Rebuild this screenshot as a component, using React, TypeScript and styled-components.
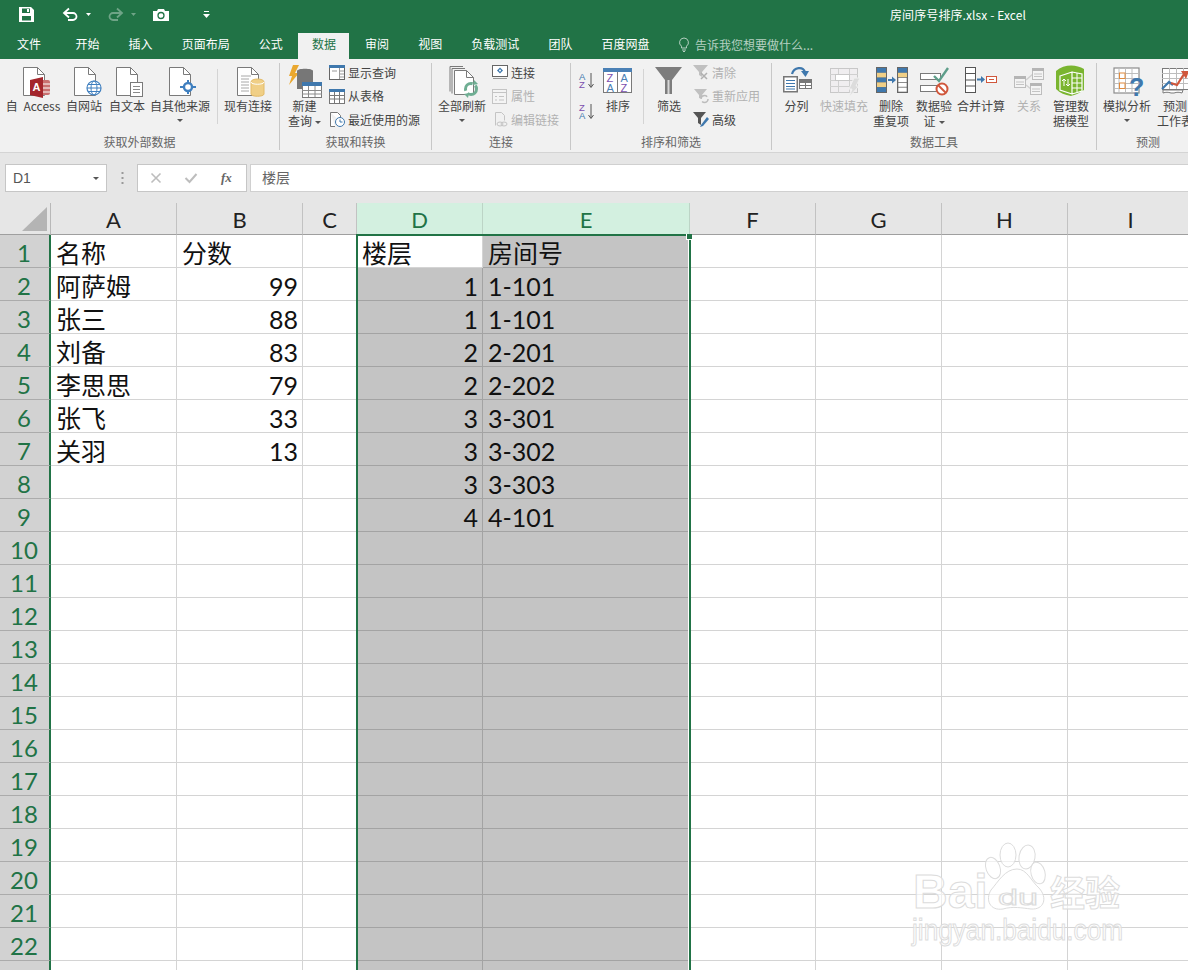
import React from "react";
import styled, { createGlobalStyle } from "styled-components";

const GREEN = "#217346";
const UI_FONT = `"Noto Sans CJK SC", "Liberation Sans", sans-serif`;
const CELL_FONT = `Lato, "Noto Sans CJK SC", sans-serif`;

const GlobalStyle = createGlobalStyle`
  html, body { margin: 0; padding: 0; background: #fff; overflow: hidden; }
  * { box-sizing: border-box; }
`;

const Page = styled.div`
  width: 1188px;
  height: 970px;
  overflow: hidden;
  display: flex;
  flex-direction: column;
  font-family: ${UI_FONT};
  font-size: 12px;
  color: #444;
`;

/* title bar */
const TitleBar = styled.div`
  height: 33px;
  flex-shrink: 0;
  background: ${GREEN};
  display: flex;
  align-items: center;
  padding: 0 0 4px 19px;
  color: #fff;
`;
const QatItem = styled.span<{ $ml?: number; $dim?: boolean }>`
  display: flex;
  margin-left: ${(p) => p.$ml || 0}px;
  opacity: ${(p) => (p.$dim ? 0.35 : 1)};
`;
const Title = styled.span`
  margin-left: 680px;
  white-space: nowrap;
  letter-spacing: 0.1px;
`;

/* tabs */
const TabBar = styled.div`
  height: 26px;
  flex-shrink: 0;
  background: ${GREEN};
  display: flex;
  gap: 2.1px;
  padding-left: 3.5px;
`;
const Tab = styled.div<{ $active?: boolean; $first?: boolean }>`
  padding: 0 13.5px;
  margin-right: ${(p) => (p.$first ? 5.4 : 0)}px;
  line-height: 22px;
  color: ${(p) => (p.$active ? GREEN : "#fff")};
  background: ${(p) => (p.$active ? "#f1f1f1" : "transparent")};
`;
const TellMe = styled.div`
  display: flex;
  align-items: center;
  gap: 5px;
  margin-left: 13px;
  padding-bottom: 4px;
  color: #b5d0c1;
`;

/* ribbon */
const Ribbon = styled.div`
  height: 94px;
  flex-shrink: 0;
  background: #f1f1f1;
  border-bottom: 1px solid #d4d4d4;
  display: flex;
  padding-top: 4px;
  overflow: hidden;
`;
const Group = styled.section<{ $w: number; $last?: boolean }>`
  width: ${(p) => p.$w}px;
  height: 87px;
  flex-shrink: 0;
  display: flex;
  flex-direction: column;
  border-right: ${(p) => (p.$last ? "none" : "1px solid #c8c8c8")};
`;
const GroupBody = styled.div<{ $pl?: number }>`
  height: 71px;
  display: flex;
  padding-left: ${(p) => p.$pl || 0}px;
`;
const GroupLabel = styled.div`
  line-height: 16px;
  text-align: center;
  color: #666;
`;
const BigBtn = styled.div<{ $w: number; $off?: boolean }>`
  width: ${(p) => p.$w}px;
  flex-shrink: 0;
  display: flex;
  flex-direction: column;
  align-items: center;
  padding-top: 2px;
  line-height: 15px;
  word-spacing: 3px;
  white-space: nowrap;
  color: ${(p) => (p.$off ? "#b1b1b1" : "#444")};
`;
const BigIconSlot = styled.div`
  height: 33px;
`;
const Caret = styled.span<{ $ml?: number }>`
  display: inline-block;
  vertical-align: middle;
  margin-left: ${(p) => p.$ml || 0}px;
  border-left: 3px solid transparent;
  border-right: 3px solid transparent;
  border-top: 3px solid #555;
`;
const CaretRow = styled.div`
  height: 15px;
  display: flex;
  align-items: center;
`;
const Divider = styled.div<{ $ml: number; $mr: number }>`
  width: 1px;
  height: 55px;
  margin: 6px ${(p) => p.$mr}px 0 ${(p) => p.$ml}px;
  background: #d4d4d4;
  flex-shrink: 0;
`;
const SmallStack = styled.div`
  display: flex;
  flex-direction: column;
  gap: 3.5px;
  margin-top: -1px;
`;
const SmallBtn = styled.div<{ $off?: boolean }>`
  height: 20px;
  display: flex;
  align-items: center;
  gap: 3px;
  white-space: nowrap;
  color: ${(p) => (p.$off ? "#b1b1b1" : "#444")};
`;
const SortStack = styled.div`
  width: 25px;
  flex-shrink: 0;
  padding: 9px 0 0 8px;
  display: flex;
  flex-direction: column;
  gap: 14px;
`;

/* formula bar */
const FormulaBar = styled.div`
  height: 50px;
  flex-shrink: 0;
  background: #e6e6e6;
  padding: 11px 0 11px 5px;
  display: flex;
`;
const NameBox = styled.div`
  width: 102px;
  background: #fff;
  border: 1px solid #c6c6c6;
  display: flex;
  align-items: center;
  justify-content: space-between;
  padding: 0 7px;
  font: 14px "Liberation Sans", sans-serif;
  color: #555;
`;
const DotsSlot = styled.div`
  width: 30px;
  display: flex;
  align-items: center;
  justify-content: center;
`;
const FxBox = styled.div`
  width: 110px;
  background: #fff;
  border: 1px solid #c6c6c6;
  display: flex;
  align-items: center;
  padding-left: 11px;
  gap: 21px;
`;
const FxLabel = styled.span`
  font: italic bold 13px "Liberation Serif", serif;
  color: #666;
  margin-left: 2px;
`;
const FormulaInput = styled.div`
  flex: 1;
  margin-left: 3px;
  background: #fff;
  border: 1px solid #d0d0d0;
  border-right: none;
  padding-left: 11px;
  font-size: 14px;
  line-height: 24px;
  color: #666;
`;

/* sheet */
const Sheet = styled.div`
  position: relative;
  flex: 1;
  display: grid;
  grid-template-columns: 51px 126px 126px 54px 126px 207px 126px 126px 126px 126px;
  grid-auto-rows: 33px;
  grid-template-rows: 32px;
  align-content: start;
  overflow: hidden;
  background: #fff;
  font-family: ${CELL_FONT};
`;
const Corner = styled.div`
  background: #e6e6e6;
  border-right: 1px solid #b8b8b8;
  border-bottom: 1px solid #9f9f9f;
  padding: 4px 0 0 22px;
`;
const ColHead = styled.div<{ $on?: boolean }>`
  background: ${(p) => (p.$on ? "#d3f0e0" : "#e6e6e6")};
  color: ${(p) => (p.$on ? GREEN : "#222")};
  border-right: 1px solid ${(p) => (p.$on ? "#bcd4c6" : "#c2c2c2")};
  border-bottom: 1px solid #9f9f9f;
  text-align: center;
  font-size: 22px;
  line-height: 34px;
`;
const RowHead = styled.div`
  background: #d2d2d2;
  color: ${GREEN};
  border-right: 2px solid ${GREEN};
  border-bottom: 1px solid #ababab;
  text-align: center;
  padding-right: 1px;
  font-size: 24px;
  line-height: 35px;
`;
const Cell = styled.div<{ $num?: boolean; $sel?: boolean }>`
  background: ${(p) => (p.$sel ? "#c4c4c4" : "#fff")};
  border-right: 1px solid ${(p) => (p.$sel ? "#a3a3a3" : "#d4d4d4")};
  border-bottom: 1px solid ${(p) => (p.$sel ? "#a3a3a3" : "#d4d4d4")};
  text-align: ${(p) => (p.$num ? "right" : "left")};
  padding: 0 4px 0 5px;
  font-size: 25px;
  line-height: 36px;
  color: #111;
  white-space: nowrap;
  overflow: hidden;
`;
const Selection = styled.div`
  position: absolute;
  left: 356px;
  top: 31px;
  width: 335px;
  bottom: -4px;
  border: 2px solid ${GREEN};
  box-shadow: inset -1px 0 0 #fff;
  pointer-events: none;
`;
const FillHandle = styled.div`
  position: absolute;
  right: -3px;
  top: -2px;
  width: 6px;
  height: 6px;
  background: ${GREEN};
  border-left: 1px solid #fff;
  border-bottom: 1px solid #fff;
`;
const Watermark = styled.svg`
  position: absolute;
  left: 905px;
  top: 637px;
  pointer-events: none;
`;

/* icons */
const SvgBase = styled.svg`
  display: block;
  flex-shrink: 0;
  overflow: visible;
`;
const Svg = ({ w = 36, h = 33, children }: { w?: number; h?: number; children: React.ReactNode }) => (
  <SvgBase width={w} height={h} viewBox={`0 0 ${w} ${h}`}>
    {children}
  </SvgBase>
);

const Doc = ({ x, y = 2.5, w = 21, h = 28 }: { x: number; y?: number; w?: number; h?: number }) => (
  <>
    <path d={`M${x} ${y}h${w - 7}l7 7v${h - 7}h${-w}z`} fill="#fff" stroke="#7a7a7a" />
    <path d={`M${x + w - 7} ${y}v7h7`} fill="none" stroke="#7a7a7a" />
  </>
);

const AccessIcon = () => (
  <Svg>
    <Doc x={8.5} />
    <rect x="24" y="15" width="11" height="15" rx="2" fill="#c9706f" />
    <path d="M24 19h11M24 23h11M24 27h11" stroke="#fff" />
    <path d="M15 15l13-3v21l-13-3z" fill="#a4262c" />
    <text x="17.5" y="26" fontFamily="Liberation Sans" fontWeight="bold" fontSize="11" fill="#fff">A</text>
  </Svg>
);
const WebIcon = () => (
  <Svg>
    <Doc x={8.5} />
    <circle cx="28" cy="23" r="7" fill="#fff" stroke="#3f7fbf" strokeWidth="1.2" />
    <ellipse cx="28" cy="23" rx="3" ry="7" fill="none" stroke="#3f7fbf" />
    <path d="M21 23h14M22 19.5h12M22 26.5h12" stroke="#3f7fbf" />
  </Svg>
);
const TextIcon = () => (
  <Svg>
    <Doc x={7.5} />
    <rect x="21.5" y="17.5" width="12" height="14" fill="#fff" stroke="#7a7a7a" />
    <path d="M24 21.5h7M24 24.5h7M24 27.5h7" stroke="#8a8a8a" />
  </Svg>
);
const OtherIcon = () => (
  <Svg>
    <Doc x={7.5} />
    <path d="M26 15v14M18 22h16" stroke="#3f7fbf" strokeWidth="2" />
    <circle cx="26" cy="22" r="4" fill="#fff" stroke="#3f7fbf" strokeWidth="2.4" />
  </Svg>
);
const ExistingIcon = () => (
  <Svg>
    <Doc x={7.5} />
    <path d="M11 11h10M11 14h8M11 17h8M11 20h8M11 23h8M11 26h8" stroke="#a8a8a8" />
    <path d="M21 17c0-4 13-4 13 0v12c0 3-13 3-13 0z" fill="#f0cf86" stroke="#e3bb68" />
    <path d="M21 17c0 3 13 3 13 0" fill="none" stroke="#fff" />
  </Svg>
);
const NewQueryIcon = () => (
  <Svg>
    <path d="M6 0h6l-4 8h4L2 20l3-9H2z" fill="#eaa82f" />
    <path d="M10 6c0-3 16-3 16 0v18H10z" fill="#777" />
    <rect x="15.5" y="17.5" width="19" height="15" fill="#fff" stroke="#7a7a7a" />
    <rect x="15" y="17" width="20" height="4" fill="#3f78ad" />
    <path d="M15 25.5h20M15 29h20M21.5 21v11M28 21v11" stroke="#8a8a8a" />
  </Svg>
);
const RefreshIcon = () => (
  <Svg>
    <path d="M6 26.5v-25h13" fill="none" stroke="#7a7a7a" />
    <path d="M8 28.5v-25h13" fill="none" stroke="#7a7a7a" />
    <Doc x={10.5} y={5.5} w={19} h={24} />
    <circle cx="27" cy="24" r="5.5" fill="none" stroke="#6fae93" strokeWidth="3" strokeDasharray="12 3" />
    <path d="M30 15l4 4-5 1zM24 33l-4-4 5-1z" fill="#6fae93" />
  </Svg>
);
const SortLetter = ({ x, y, c, t }: { x: number; y: number; c: string; t: string }) => (
  <text x={x} y={y} fontFamily="Liberation Sans" fontSize="11" fill={c}>{t}</text>
);
const SortBigIcon = () => (
  <Svg>
    <rect x="3.5" y="3.5" width="28" height="24" fill="#fff" stroke="#7a7a7a" />
    <rect x="3" y="3" width="29" height="4" fill="#4a80b5" />
    <path d="M17.5 7v21" stroke="#7a7a7a" />
    <SortLetter x={6.5} y={17} c="#7b4fae" t="Z" />
    <SortLetter x={6.5} y={27} c="#4a80b5" t="A" />
    <SortLetter x={20.5} y={17} c="#4a80b5" t="A" />
    <SortLetter x={20.5} y={27} c="#7b4fae" t="Z" />
  </Svg>
);
const FilterBigIcon = () => (
  <Svg>
    <path d="M4 2h27L21 15v14h-7V15z" fill="#7d7d7d" />
    <path d="M16.5 15h2v14h-2z" fill="#d8d8d8" />
  </Svg>
);
const SplitIcon = () => (
  <Svg>
    <rect x="4.75" y="11.75" width="13.5" height="15" fill="#fff" stroke="#777" strokeWidth="1.5" />
    <path d="M7 15.5h9M7 18.5h9M7 21.5h9M7 24h9" stroke="#3f78ad" />
    <rect x="20" y="14" width="13" height="10" fill="#777" />
    <path d="M21 18h5v2h-5zM27 18h5v2h-5zM21 21h5v2h-5zM27 21h5v2h-5z" fill="#fff" />
    <path d="M13 9c2-7 11-8 13-2" fill="none" stroke="#3f78ad" strokeWidth="2.2" />
    <path d="M22 6h8l-3.5 6z" fill="#3f78ad" />
  </Svg>
);
const FlashFillIcon = () => (
  <Svg>
    <rect x="4.5" y="3.5" width="27" height="24" fill="#f0eef0" stroke="#c8c8c8" />
    <path d="M4 9.5h28M4 15.5h28M4 21.5h28M12.5 4v24M23.5 4v24" stroke="#d0d0d0" />
    <rect x="9.5" y="9.5" width="14" height="6" fill="#fff" stroke="#c8c8c8" />
    <path d="M28 13h6l-4 8h3l-10 11 3-8h-3z" fill="#dcdcdc" stroke="#f1f1f1" />
  </Svg>
);
const DupColumn = ({ x, a }: { x: number; a: string[] }) => (
  <>
    <rect x={x} y="2" width="11" height="26" fill="#666" />
    {a.map((f, i) => (
      <rect key={i} x={x + 1} y={3 + i * 4.8} width="9" height="4.8" fill={f} stroke={f === "#fff" ? "#666" : "none"} strokeWidth="0.6" />
    ))}
  </>
);
const DuplicatesIcon = () => (
  <Svg>
    <DupColumn x={3} a={["#3f78ad", "#f0cf86", "#3f78ad", "#f0cf86", "#3f78ad"]} />
    <DupColumn x={24} a={["#3f78ad", "#f0cf86", "#fff", "#fff", "#fff"]} />
    <path d="M15 15h5" stroke="#3f78ad" strokeWidth="2" />
    <path d="M19 11.5l4 3.5-4 3.5z" fill="#3f78ad" />
  </Svg>
);
const ValidationIcon = () => (
  <Svg>
    <rect x="4.5" y="8.5" width="20" height="6" fill="#fff" stroke="#7a7a7a" />
    <rect x="4.5" y="20.5" width="20" height="6" fill="#fff" stroke="#7a7a7a" />
    <path d="M18 11l5 5 9-13" fill="none" stroke="#5e9e8a" strokeWidth="2.4" />
    <circle cx="26" cy="24" r="5.5" fill="#fff" stroke="#d0573c" strokeWidth="2" />
    <path d="M22 20l8 8" stroke="#d0573c" strokeWidth="2" />
  </Svg>
);
const ConsolidateIcon = () => (
  <Svg>
    <rect x="2.5" y="2.5" width="10" height="25" fill="#fff" stroke="#555" />
    <path d="M2 8.5h11M2 15h11M2 21h11" stroke="#555" />
    <path d="M14 14.5h5" stroke="#3f78ad" strokeWidth="2" />
    <path d="M18 11l4 3.5-4 3.5z" fill="#3f78ad" />
    <rect x="23.5" y="11.5" width="10" height="6" fill="#fff" stroke="#d0573c" />
    <path d="M26 14.5h5" stroke="#d0573c" />
  </Svg>
);
const RelationBox = ({ x, y }: { x: number; y: number }) => (
  <>
    <rect x={x + 0.5} y={y + 0.5} width="11" height="11" fill="#f4f4f4" stroke="#bdbdbd" />
    <rect x={x} y={y} width="12" height="3" fill="#b5b5b5" />
    <path d={`M${x + 2} ${y + 6}h8M${x + 2} ${y + 8.5}h8`} stroke="#c4c4c4" />
  </>
);
const RelationIcon = () => (
  <Svg>
    <path d="M15 15l7-6M15 20l5 4" stroke="#d0d0d0" strokeWidth="1.5" />
    <RelationBox x={3} y={11} />
    <RelationBox x={21} y={3} />
    <RelationBox x={19} y={18} />
  </Svg>
);
const ModelIcon = () => (
  <Svg>
    <path d="M3 6c8-7 20-7 28-2v21c-6 4-10 5-13 6-6-1-11-3-15-7z" fill="#7ab530" />
    <path d="M7 11l12-4v22l-12-4zM19 7l10 2v17l-10 3" fill="none" stroke="#fff" strokeWidth="1.2" />
    <path d="M19 13h10M19 18h10M19 23h10M24 8v19" stroke="#fff" />
    <path d="M11 21v-7l-2 2M11 14l2 2M15 14v7l-2-2M15 21l2-2" fill="none" stroke="#fff" />
  </Svg>
);
const WhatIfIcon = () => (
  <Svg>
    <rect x="5" y="3" width="25" height="25" fill="#fff" stroke="#8c8c8c" strokeWidth="1.2" />
    <path d="M5 8.5h25M5 13.5h25M5 18.5h25M5 23.5h25M10 3v25M16.5 3v25M23 3v25" stroke="#bdbdbd" />
    <rect x="10.5" y="8" width="5.5" height="5.5" fill="#fff" stroke="#e08a3c" />
    <rect x="10.5" y="18" width="5.5" height="5.5" fill="#fff" stroke="#e08a3c" />
    <text x="20" y="31" fontFamily="Liberation Sans" fontWeight="bold" fontSize="25" fill="#3f78ad">?</text>
  </Svg>
);
const ForecastIcon = () => (
  <Svg>
    <rect x="5.5" y="3.5" width="28" height="21" fill="#fff" stroke="#7a7a7a" />
    <path d="M5 8.5h29M5 13.5h29M5 18.5h29M12.5 3v21M19.5 3v21M26.5 3v21" stroke="#bdbdbd" />
    <path d="M6 28c3-1 5-1 8 0h3c3-1 5-1 8 0l1-3H6z" fill="#fff" stroke="#7a7a7a" />
    <path d="M5 24l7-7 4 3" fill="none" stroke="#3f78ad" strokeWidth="2.2" />
    <path d="M14 18l6 2 7-11" fill="none" stroke="#d0573c" strokeWidth="2.2" />
    <path d="M24 6h8l-3 8z" fill="#d0573c" />
  </Svg>
);

const ShowQueryIcon = () => (
  <Svg w={16} h={16}>
    <rect x=".5" y="1.5" width="15" height="14" fill="#fff" stroke="#666" />
    <rect x="0" y="1" width="16" height="3" fill="#3f78ad" />
    <path d="M10.5 4v11M11 7h4M11 10h4M11 13h4M3 7h5" stroke="#999" />
  </Svg>
);
const TableIcon = () => (
  <Svg w={16} h={16}>
    <rect x=".5" y="1.5" width="15" height="14" fill="#fff" stroke="#777" />
    <rect x="0" y="1" width="16" height="3" fill="#3f78ad" />
    <path d="M0 7.5h16M0 11h16M5.5 4v11M10.5 4v11" stroke="#777" />
  </Svg>
);
const RecentIcon = () => (
  <Svg w={16} h={16}>
    <path d="M1.5 1.5h7l3 3v6M6 15.5H1.5v-14" fill="#fff" stroke="#777" />
    <circle cx="11" cy="11" r="4.5" fill="#fff" stroke="#3f78ad" />
    <path d="M11 8.5V11h2.5" fill="none" stroke="#3f78ad" />
  </Svg>
);
const ConnectionIcon = () => (
  <Svg w={16} h={16}>
    <rect x=".5" y="1.5" width="15" height="11" fill="#fff" stroke="#666" />
    <path d="M1 14.5h14" stroke="#999" />
    <path d="M8 3.5l3 3-3 3-3-3z" fill="#3f78ad" />
    <circle cx="8" cy="6.5" r="1" fill="#fff" />
  </Svg>
);
const PropsIcon = () => (
  <Svg w={16} h={16}>
    <rect x=".5" y="1.5" width="14" height="14" fill="#f4f4f4" stroke="#c4c4c4" />
    <path d="M1 4.5h13M7 8.5h5M7 12h5M3 8.5h2M3 12h2" stroke="#c4c4c4" />
  </Svg>
);
const EditLinkIcon = () => (
  <Svg w={16} h={16}>
    <path d="M3.5 14.5v-13h6l3 3v5" fill="none" stroke="#c4c4c4" />
    <ellipse cx="8" cy="13" rx="3" ry="2" fill="none" stroke="#c4c4c4" />
    <ellipse cx="12" cy="13" rx="3" ry="2" fill="none" stroke="#c4c4c4" />
  </Svg>
);
const ClearIcon = () => (
  <Svg w={16} h={16}>
    <path d="M0 1h15L9 8v5L6 11V8z" fill="#c0c0c0" />
    <path d="M8 9l6 6M14 9l-6 6" stroke="#b0b0b0" strokeWidth="1.5" />
  </Svg>
);
const ReapplyIcon = () => (
  <Svg w={16} h={16}>
    <path d="M1 1h13L9 7v4L6 10V7z" fill="#c0c0c0" />
    <circle cx="11.5" cy="11" r="3.5" fill="none" stroke="#bcbcbc" strokeWidth="1.5" strokeDasharray="8 3" />
  </Svg>
);
const AdvancedIcon = () => (
  <Svg w={16} h={16}>
    <path d="M0 1h13L8 7v7L5 12V7z" fill="#555" />
    <path d="M8 14l6-8 2 2-6 7-3 1z" fill="#3f78ad" />
  </Svg>
);
const AzIcon = ({ flip }: { flip?: boolean }) => (
  <Svg w={17} h={17}>
    <text x="0" y="8" fontFamily="Liberation Sans" fontSize="9.5" fill={flip ? "#7b4fae" : "#3f78ad"}>{flip ? "Z" : "A"}</text>
    <text x="0" y="16" fontFamily="Liberation Sans" fontSize="9.5" fill={flip ? "#3f78ad" : "#7b4fae"}>{flip ? "A" : "Z"}</text>
    <path d="M12 1v14M9.5 12l2.5 3.5 2.5-3.5" fill="none" stroke="#555" />
  </Svg>
);

/* title bar icons */
const SaveIcon = () => (
  <Svg w={15} h={15}>
    <path d="M0 0h12l3 3v12H0z" fill="#fff" />
    <rect x="3" y="1.5" width="8" height="4.5" fill={GREEN} />
    <rect x="3" y="9" width="9" height="4.5" fill={GREEN} />
    <rect x="8" y="2" width="2" height="3" fill="#fff" />
  </Svg>
);
const UndoIcon = ({ flip }: { flip?: boolean }) => (
  <Svg w={15} h={13}>
    <g transform={flip ? "translate(15 0) scale(-1 1)" : undefined}>
      <path d="M2 5h8a3.5 3.5 0 0 1 0 7H5" fill="none" stroke="#fff" strokeWidth="1.8" />
      <path d="M6 .5L1 5l5 4.5" fill="none" stroke="#fff" strokeWidth="1.8" />
    </g>
  </Svg>
);
const TitleCaret = () => (
  <Svg w={5} h={3}>
    <path d="M0 0h5L2.5 3z" fill="#fff" />
  </Svg>
);
const CameraIcon = () => (
  <Svg w={16} h={12}>
    <path d="M0 2h4l1-2h6l1 2h4v10H0z" fill="#fff" />
    <circle cx="8" cy="6.5" r="3" fill="none" stroke={GREEN} strokeWidth="1.3" />
  </Svg>
);
const CustomizeIcon = () => (
  <Svg w={7} h={7}>
    <path d="M1 .5h5" stroke="#fff" />
    <path d="M0 3h7L3.5 7z" fill="#fff" />
  </Svg>
);
const BulbIcon = () => (
  <Svg w={12} h={15}>
    <path d="M6 1a4.500 4.500 0 0 0-2.500 8.200V11h5V9.200A4.500 4.500 0 0 0 6 1z" fill="none" stroke="#b5d0c1" />
    <path d="M4 13h4M5 14.5h2" stroke="#b5d0c1" />
  </Svg>
);
const DotsIcon = () => (
  <Svg w={3} h={12}>
    <path d="M.5 1h2M.5 6h2M.5 11h2" stroke="#999" strokeWidth="2" />
  </Svg>
);
const CancelIcon = () => (
  <Svg w={14} h={14}>
    <path d="M2.5 2.5l9 9M11.5 2.5l-9 9" stroke="#bdbdbd" strokeWidth="1.6" />
  </Svg>
);
const EnterIcon = () => (
  <Svg w={14} h={14}>
    <path d="M1.5 7l4 4 7-8" fill="none" stroke="#bdbdbd" strokeWidth="2" />
  </Svg>
);

const Big = ({ w, icon, off, lines, caret }: { w: number; icon: React.ReactNode; off?: boolean; lines: string[]; caret?: boolean }) => (
  <BigBtn $w={w} $off={off}>
    <BigIconSlot>{icon}</BigIconSlot>
    {lines.map((l, i) => (
      <span key={i}>
        {l}
        {caret && lines.length > 1 && i === lines.length - 1 && <Caret $ml={3} />}
      </span>
    ))}
    {caret && lines.length === 1 && (
      <CaretRow>
        <Caret />
      </CaretRow>
    )}
  </BigBtn>
);

const Small = ({ icon, off, text }: { icon: React.ReactNode; off?: boolean; text: string }) => (
  <SmallBtn $off={off}>
    {icon}
    <span>{text}</span>
  </SmallBtn>
);

const TABS = ["文件", "开始", "插入", "页面布局", "公式", "数据", "审阅", "视图", "负载测试", "团队", "百度网盘"];
const COLS = ["A", "B", "C", "D", "E", "F", "G", "H", "I"];
const DATA: Record<number, [string, string, string, string]> = {
  1: ["名称", "分数", "楼层", "房间号"],
  2: ["阿萨姆", "99", "1", "1-101"],
  3: ["张三", "88", "1", "1-101"],
  4: ["刘备", "83", "2", "2-201"],
  5: ["李思思", "79", "2", "2-202"],
  6: ["张飞", "33", "3", "3-301"],
  7: ["关羽", "13", "3", "3-302"],
  8: ["", "", "3", "3-303"],
  9: ["", "", "4", "4-101"],
};
const ROWS = Array.from({ length: 23 }, (_, i) => i + 1);

export default function App() {
  return (
    <Page>
      <GlobalStyle />
      <TitleBar>
        <QatItem><SaveIcon /></QatItem>
        <QatItem $ml={29}><UndoIcon /></QatItem>
        <QatItem $ml={8}><TitleCaret /></QatItem>
        <QatItem $ml={17} $dim><UndoIcon flip /></QatItem>
        <QatItem $ml={8} $dim><TitleCaret /></QatItem>
        <QatItem $ml={17}><CameraIcon /></QatItem>
        <QatItem $ml={34}><CustomizeIcon /></QatItem>
        <Title>房间序号排序.xlsx - Excel</Title>
      </TitleBar>

      <TabBar>
        {TABS.map((t, i) => (
          <Tab key={t} $first={i === 0} $active={t === "数据"}>{t}</Tab>
        ))}
        <TellMe>
          <BulbIcon />
          <span>告诉我您想要做什么...</span>
        </TellMe>
      </TabBar>

      <Ribbon>
        <Group $w={280}>
          <GroupBody $pl={3}>
            <Big w={60} icon={<AccessIcon />} lines={["自 Access"]} />
            <Big w={42} icon={<WebIcon />} lines={["自网站"]} />
            <Big w={44} icon={<TextIcon />} lines={["自文本"]} />
            <Big w={62} icon={<OtherIcon />} lines={["自其他来源"]} caret />
            <Divider $ml={6} $mr={1} />
            <Big w={58} icon={<ExistingIcon />} lines={["现有连接"]} />
          </GroupBody>
          <GroupLabel>获取外部数据</GroupLabel>
        </Group>
        <Group $w={152}>
          <GroupBody>
            <Big w={49} icon={<NewQueryIcon />} lines={["新建", "查询"]} caret />
            <SmallStack>
              <Small icon={<ShowQueryIcon />} text="显示查询" />
              <Small icon={<TableIcon />} text="从表格" />
              <Small icon={<RecentIcon />} text="最近使用的源" />
            </SmallStack>
          </GroupBody>
          <GroupLabel>获取和转换</GroupLabel>
        </Group>
        <Group $w={139}>
          <GroupBody>
            <Big w={60} icon={<RefreshIcon />} lines={["全部刷新"]} caret />
            <SmallStack>
              <Small icon={<ConnectionIcon />} text="连接" />
              <Small off icon={<PropsIcon />} text="属性" />
              <Small off icon={<EditLinkIcon />} text="编辑链接" />
            </SmallStack>
          </GroupBody>
          <GroupLabel>连接</GroupLabel>
        </Group>
        <Group $w={201}>
          <GroupBody>
            <SortStack>
              <AzIcon />
              <AzIcon flip />
            </SortStack>
            <Big w={44} icon={<SortBigIcon />} lines={["排序"]} />
            <Divider $ml={3} $mr={1} />
            <Big w={48} icon={<FilterBigIcon />} lines={["筛选"]} />
            <SmallStack>
              <Small off icon={<ClearIcon />} text="清除" />
              <Small off icon={<ReapplyIcon />} text="重新应用" />
              <Small icon={<AdvancedIcon />} text="高级" />
            </SmallStack>
          </GroupBody>
          <GroupLabel>排序和筛选</GroupLabel>
        </Group>
        <Group $w={325}>
          <GroupBody>
            <Big w={49} icon={<SplitIcon />} lines={["分列"]} />
            <Big w={46} off icon={<FlashFillIcon />} lines={["快速填充"]} />
            <Big w={48} icon={<DuplicatesIcon />} lines={["删除", "重复项"]} />
            <Big w={38} icon={<ValidationIcon />} lines={["数据验", "证"]} caret />
            <Big w={56} icon={<ConsolidateIcon />} lines={["合并计算"]} />
            <Big w={40} off icon={<RelationIcon />} lines={["关系"]} />
            <Big w={44} icon={<ModelIcon />} lines={["管理数", "据模型"]} />
          </GroupBody>
          <GroupLabel>数据工具</GroupLabel>
        </Group>
        <Group $w={102} $last>
          <GroupBody>
            <Big w={60} icon={<WhatIfIcon />} lines={["模拟分析"]} caret />
            <Big w={36} icon={<ForecastIcon />} lines={["预测", "工作表"]} />
          </GroupBody>
          <GroupLabel>预测</GroupLabel>
        </Group>
      </Ribbon>

      <FormulaBar>
        <NameBox>
          <span>D1</span>
          <Caret />
        </NameBox>
        <DotsSlot><DotsIcon /></DotsSlot>
        <FxBox>
          <CancelIcon />
          <EnterIcon />
          <FxLabel>fx</FxLabel>
        </FxBox>
        <FormulaInput>楼层</FormulaInput>
      </FormulaBar>

      <Sheet>
        <Corner>
          <Svg w={25} h={24}>
            <path d="M25 0v24H0z" fill="#b4b4b4" />
          </Svg>
        </Corner>
        {COLS.map((c) => (
          <ColHead key={c} $on={c === "D" || c === "E"}>{c}</ColHead>
        ))}
        {ROWS.map((r) => {
          const d = DATA[r] || ["", "", "", ""];
          return (
            <React.Fragment key={r}>
              <RowHead>{r < 23 ? r : ""}</RowHead>
              <Cell>{d[0]}</Cell>
              <Cell $num={r > 1}>{d[1]}</Cell>
              <Cell />
              <Cell $num={r > 1} $sel={r > 1}>{d[2]}</Cell>
              <Cell $sel>{d[3]}</Cell>
              <Cell />
              <Cell />
              <Cell />
              <Cell />
            </React.Fragment>
          );
        })}
        <Selection>
          <FillHandle />
        </Selection>
        <Watermark width="283" height="110" viewBox="0 0 283 110">
          <g fill="#fff" fillOpacity="0.65" stroke="#dcdcdc" strokeWidth="1">
            <text x="8" y="68" fontFamily="Liberation Sans" fontWeight="bold" fontSize="48">Bai</text>
            <ellipse cx="88" cy="28" rx="7" ry="11" transform="rotate(-20 88 28)" />
            <ellipse cx="103" cy="15" rx="8" ry="12" />
            <ellipse cx="122" cy="17" rx="8" ry="12" transform="rotate(10 122 17)" />
            <ellipse cx="133" cy="33" rx="7" ry="11" transform="rotate(-15 133 33)" />
            <path d="M112 29c10 0 14 12 22 19 9 10 5 22-8 21-9-1-18-3-28 0-13 2-18-9-12-19 7-8 14-21 26-21z" />
            <text x="93" y="65" fontFamily="Liberation Sans" fontSize="22" textLength="40" lengthAdjust="spacingAndGlyphs" fillOpacity="1">du</text>
            <text x="145" y="66" fontFamily={UI_FONT} fontWeight="bold" fontSize="35">经验</text>
            <text x="7" y="100" fontFamily="Liberation Sans" fontSize="29" textLength="211" lengthAdjust="spacingAndGlyphs">jingyan.baidu.com</text>
          </g>
        </Watermark>
      </Sheet>
    </Page>
  );
}
